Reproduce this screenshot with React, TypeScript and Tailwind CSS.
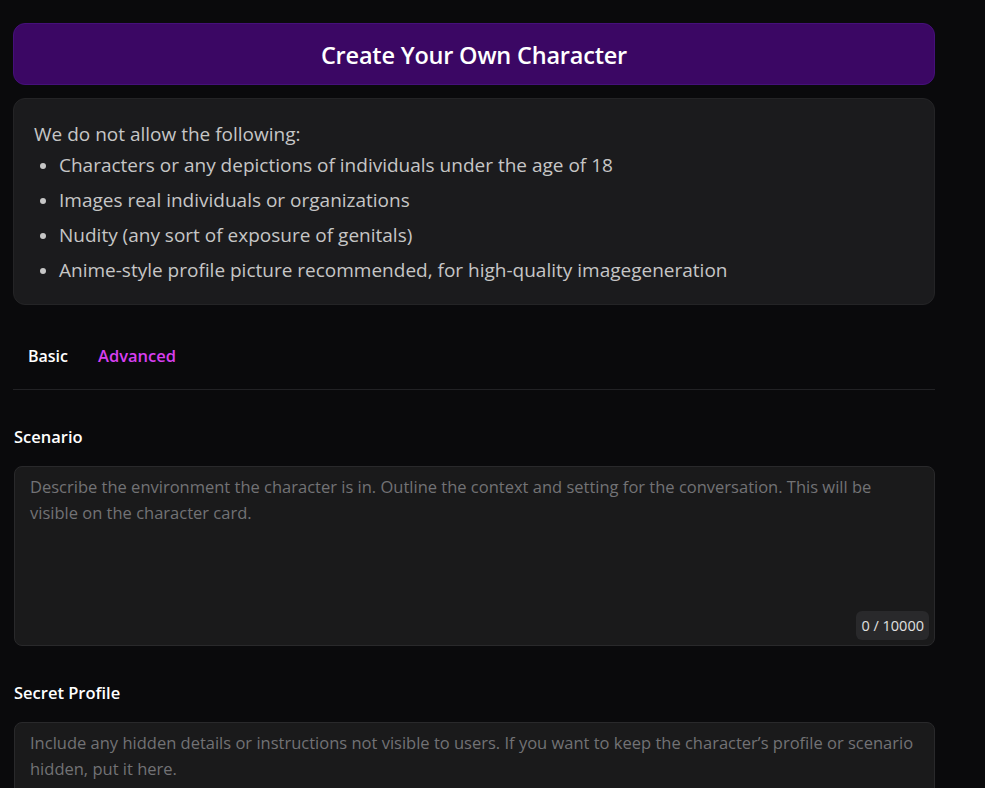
import React from "react";

const font = { fontFamily: '"Open Sans", "Noto Sans", sans-serif' };

export default function App() {
  const rules = [
    "Characters or any depictions of individuals under the age of 18",
    "Images real individuals or organizations",
    "Nudity (any sort of exposure of genitals)",
    "Anime-style profile picture recommended, for high-quality imagegeneration",
  ];
  return (
    <div className="min-h-screen bg-[#0a0a0c] pt-[23px] pl-[13px]" style={font}>
      <div className="w-[922px] flex flex-col">
        <div className="h-[62px] rounded-xl bg-[#3b0764] border border-[#45107a] flex items-center justify-center">
          <h1 className="mt-[3px] text-[23.5px] font-semibold text-white tracking-[-0.2px]">Create Your Own Character</h1>
        </div>

        <div className="mt-[13px] h-[207px] rounded-xl bg-[#1b1b1d] border border-[#242426] pl-[20px] pt-[21px]">
          <p className="text-[19px] leading-[28px] text-[#c6c6c6]">We do not allow the following:</p>
          <ul className="mt-[0px] flex flex-col">
            {rules.map((r) => (
              <li key={r} className="flex items-center h-[35px] text-[19px] text-[#c6c6c6]">
                <span className="ml-[6px] mr-[13px] w-[6px] h-[6px] rounded-full bg-[#c6c6c6]" />
                {r}
              </li>
            ))}
          </ul>
        </div>

        <div className="mt-[32px] h-[53px] flex items-start gap-[30px] pl-[15px] border-b border-[#222225]">
          <button className="text-[16px] font-semibold text-white leading-[40px] -mt-[1px]">Basic</button>
          <button className="text-[16.5px] font-semibold text-[#d83ff0] leading-[40px] -mt-[1px]">Advanced</button>
        </div>

        <label className="mt-[35px] ml-[1px] text-[16.5px] font-semibold text-white leading-[24px]">Scenario</label>
        <div className="mt-[17px] ml-[1px] relative h-[180px] rounded-lg bg-[#1a1a1b] border border-[#29292b]">
          <p className="px-[15px] pt-[7px] text-[16.5px] leading-[26px] text-[#727275]">
            Describe the environment the character is in. Outline the context and setting for the conversation. This will be visible on the character card.
          </p>
          <span className="absolute right-[5px] bottom-[5px] px-[5px] h-[29px] flex items-center rounded-md bg-[#29292b] text-[14.5px] text-[#e0e0e0]">0 / 10000</span>
        </div>

        <label className="mt-[35px] ml-[1px] text-[16.5px] font-semibold text-white leading-[24px]">Secret Profile</label>
        <div className="mt-[17px] ml-[1px] relative h-[180px] rounded-lg bg-[#1a1a1b] border border-[#29292b]">
          <p className="px-[15px] pt-[7px] text-[16.5px] leading-[26px] text-[#727275]">
            Include any hidden details or instructions not visible to users. If you want to keep the character’s profile or scenario hidden, put it here.
          </p>
        </div>
      </div>
    </div>
  );
}
